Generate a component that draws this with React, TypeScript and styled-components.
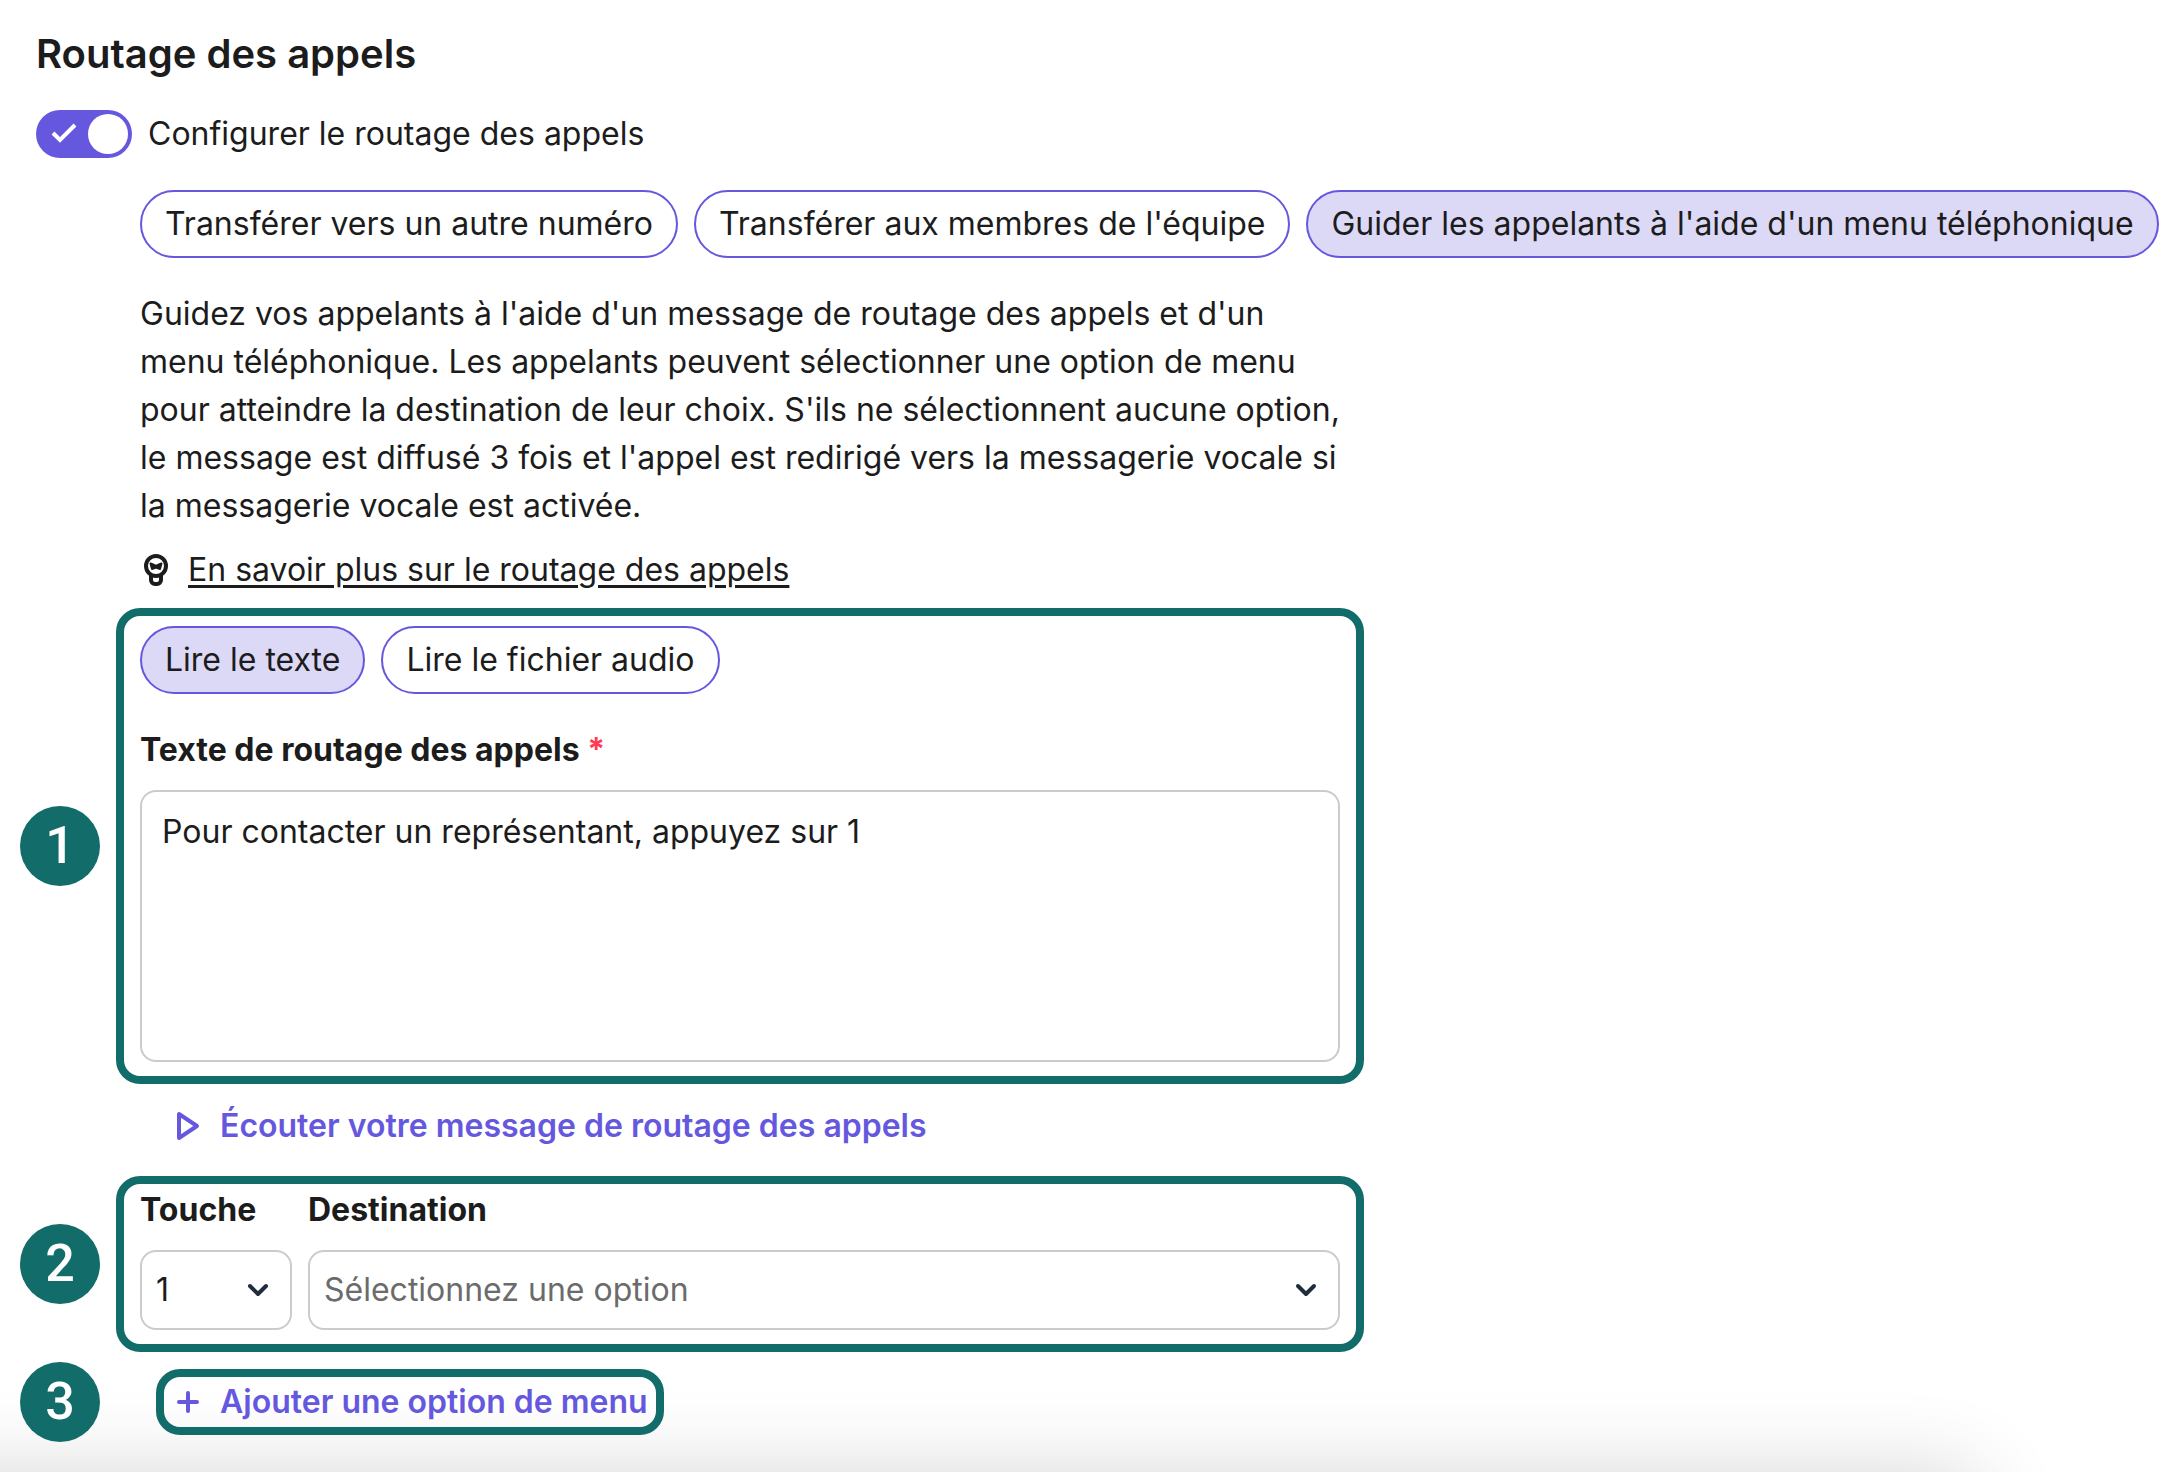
import React from "react";
import styled, { createGlobalStyle } from "styled-components";

const ink = "#1c1c1c";
const violet = "#6558de";
const lilac = "#dcd9f7";
const teal = "#126c69";
const line = "#cbcbcb";

const GlobalStyle = createGlobalStyle`
  *, *::before, *::after { box-sizing: border-box; }
  body { margin: 0; background: #fff; }
  body, button, input, textarea, select {
    font-family: Inter, "Liberation Sans", sans-serif;
    font-size: 32px;
    line-height: 48px;
    color: ${ink};
  }
`;

const Page = styled.main`
  position: relative;
  isolation: isolate;
  min-height: 100vh;
  overflow: hidden;
  padding: 24px 12px 28px 20px;
`;

const Heading = styled.h1`
  margin: 0 16px;
  font-size: 40px;
  font-weight: 600;
  line-height: 60px;
`;

const ToggleRow = styled.label`
  display: flex;
  align-items: center;
  gap: 16px;
  margin: 26px 16px 0;
  cursor: pointer;
`;

const Switch = styled.span`
  display: grid;
  width: 96px;
  height: 48px;
  padding: 4px;
  border-radius: 24px;
  background: ${violet};
  grid-template-columns: 48px 40px;
  align-items: center;

  & > * { grid-row: 1; }
`;

const SwitchInput = styled.input`
  appearance: none;
  grid-column: 1 / 3;
  width: 88px;
  height: 40px;
  margin: 0;
  border-radius: 20px;
  cursor: pointer;
`;

const SwitchCheck = styled.svg`
  grid-column: 1;
  justify-self: center;
  width: 28px;
  height: 24px;
`;

const Knob = styled.span`
  grid-column: 2;
  width: 40px;
  height: 40px;
  border-radius: 50%;
  background: #fff;
`;

const Intro = styled.section`
  display: flex;
  flex-direction: column;
  padding-left: 120px;
  margin-top: 32px;
`;

const ChipRow = styled.div`
  display: flex;
  flex-wrap: wrap;
  gap: 16px;
`;

const Chip = styled.button<{ $selected?: boolean }>`
  height: 68px;
  padding: 0 23px;
  border: 2px solid ${violet};
  border-radius: 34px;
  background: ${({ $selected }) => ($selected ? lilac : "#fff")};
  white-space: nowrap;
  cursor: pointer;
`;

const Description = styled.p`
  max-width: 1200px;
  margin: 32px 0 16px;
`;

const LearnMore = styled.a`
  display: flex;
  align-items: center;
  align-self: flex-start;
  gap: 16px;
  color: ${ink};
  text-decoration: none;

  span {
    text-decoration: underline;
    text-decoration-thickness: 3px;
    text-underline-offset: 4px;
  }
`;

const BulbIcon = styled.svg`
  width: 32px;
  height: 40px;
`;

const Step = styled.section`
  display: grid;
  grid-template-columns: 80px minmax(0, 1248px);
  align-items: center;
  column-gap: 16px;
`;

const StepNumber = styled.span`
  display: grid;
  place-items: center;
  width: 80px;
  height: 80px;
  border-radius: 50%;
  background: ${teal};
  color: #fff;
  font-family: Roboto, "Liberation Sans", sans-serif;
  font-size: 52px;
  font-weight: 500;
  line-height: 60px;
`;

const Frame = styled.div`
  border: 8px solid ${teal};
  border-radius: 24px;
`;

const MessageStep = styled(Step)`
  margin-top: 14px;
`;

const MessageFrame = styled(Frame)`
  display: flex;
  flex-direction: column;
  padding: 10px 16px 14px;
`;

const Label = styled.label`
  font-weight: 700;
`;

const MessageLabel = styled(Label)`
  margin: 32px 0 16px;
`;

const Required = styled.span`
  color: #ff3b55;
`;

const Message = styled.textarea`
  width: 100%;
  height: 272px;
  padding: 16px 20px;
  border: 2px solid ${line};
  border-radius: 16px;
  background: #fff;
  resize: none;
`;

const ActionButton = styled.button`
  display: flex;
  align-items: center;
  gap: 16px;
  padding: 0;
  border: 0;
  background: transparent;
  color: ${violet};
  font-weight: 600;
  white-space: nowrap;
  cursor: pointer;
`;

const ActionIcon = styled.svg`
  width: 32px;
  height: 32px;
`;

const Listen = styled.div`
  display: flex;
  padding: 18px 0 26px 152px;
`;

const OptionFrame = styled(Frame)`
  display: grid;
  grid-template-columns: 152px minmax(0, 1fr);
  gap: 16px;
  padding: 2px 16px 14px;
`;

const Field = styled.div`
  display: flex;
  flex-direction: column;
  gap: 16px;
`;

const SelectBox = styled.div`
  display: grid;
  align-items: center;

  & > * { grid-area: 1 / 1; }
`;

const Select = styled.select<{ $muted?: boolean }>`
  appearance: none;
  width: 100%;
  height: 80px;
  padding: 0 64px 0 14px;
  border: 2px solid ${line};
  border-radius: 16px;
  background: #fff;
  color: ${({ $muted }) => ($muted ? "#6b6b6b" : ink)};
`;

const Chevron = styled.svg`
  justify-self: end;
  width: 24px;
  height: 24px;
  margin-right: 22px;
  pointer-events: none;
`;

const AddStep = styled(Step)`
  margin-top: 10px;
`;

const AddFrame = styled(Frame)`
  justify-self: start;
  margin-left: 40px;
  padding: 1px 8px;
`;

const BottomShade = styled.div`
  position: absolute;
  z-index: -1;
  inset: auto 0 0 0;
  height: 100px;
  overflow: hidden;
  pointer-events: none;

  &::after {
    content: "";
    position: absolute;
    top: 100px;
    left: -200px;
    right: 200px;
    height: 200px;
    border-radius: 24px;
    box-shadow: 0 0 84px rgba(0, 0, 0, 0.16);
  }
`;

function SelectChevron() {
  return (
    <Chevron viewBox="0 0 24 24" fill="none" stroke="#1f2d3d" strokeWidth="4" strokeLinecap="round" strokeLinejoin="round" aria-hidden="true">
      <path d="M4 8l8 8 8-8" />
    </Chevron>
  );
}

export default function App() {
  return (
    <>
      <GlobalStyle />
      <Page lang="fr">
        <BottomShade />
        <Heading>Routage des appels</Heading>
        <ToggleRow>
          <Switch>
            <SwitchInput type="checkbox" role="switch" defaultChecked />
            <SwitchCheck viewBox="0 0 28 24" fill="none" stroke="#fff" strokeWidth="4" aria-hidden="true">
              <path d="M3 11l7 7L25 3" />
            </SwitchCheck>
            <Knob />
          </Switch>
          Configurer le routage des appels
        </ToggleRow>
        <Intro>
          <ChipRow>
            <Chip type="button">Transférer vers un autre numéro</Chip>
            <Chip type="button">Transférer aux membres de l'équipe</Chip>
            <Chip type="button" $selected>Guider les appelants à l'aide d'un menu téléphonique</Chip>
          </ChipRow>
          <Description>
            Guidez vos appelants à l'aide d'un message de routage des appels et d'un menu
            téléphonique. Les appelants peuvent sélectionner une option de menu pour atteindre la
            destination de leur choix. S'ils ne sélectionnent aucune option, le message est diffusé
            3 fois et l'appel est redirigé vers la messagerie vocale si la messagerie vocale est
            activée.
          </Description>
          <LearnMore href="#routage">
            <BulbIcon viewBox="0 0 32 40" fill="none" stroke={ink} strokeLinejoin="round" aria-hidden="true">
              <circle cx="16" cy="16" r="10" strokeWidth="4" />
              <path d="M11 25v5a4 4 0 0 0 4 4h2a4 4 0 0 0 4-4v-5" strokeWidth="4" />
              <path d="M10.500 13.500l2.500 1 3 1.500 3-1.500 2.500-1-1.500 5.500-4-1.500-4 1.500z" fill={ink} strokeWidth="2" />
            </BulbIcon>
            <span>En savoir plus sur le routage des appels</span>
          </LearnMore>
        </Intro>
        <MessageStep>
          <StepNumber>1</StepNumber>
          <MessageFrame>
            <ChipRow>
              <Chip type="button" $selected>Lire le texte</Chip>
              <Chip type="button">Lire le fichier audio</Chip>
            </ChipRow>
            <MessageLabel htmlFor="message">
              Texte de routage des appels <Required>*</Required>
            </MessageLabel>
            <Message id="message" defaultValue="Pour contacter un représentant, appuyez sur 1" />
          </MessageFrame>
        </MessageStep>
        <Listen>
          <ActionButton type="button">
            <ActionIcon viewBox="0 0 32 32" fill="none" stroke="currentColor" strokeWidth="4" strokeLinejoin="round" aria-hidden="true">
              <path d="M7 4v24l18-12z" />
            </ActionIcon>
            Écouter votre message de routage des appels
          </ActionButton>
        </Listen>
        <Step>
          <StepNumber>2</StepNumber>
          <OptionFrame>
            <Field>
              <Label htmlFor="key">Touche</Label>
              <SelectBox>
                <Select id="key" defaultValue="1">
                  <option>1</option>
                </Select>
                <SelectChevron />
              </SelectBox>
            </Field>
            <Field>
              <Label htmlFor="destination">Destination</Label>
              <SelectBox>
                <Select id="destination" defaultValue="" $muted>
                  <option value="">Sélectionnez une option</option>
                </Select>
                <SelectChevron />
              </SelectBox>
            </Field>
          </OptionFrame>
        </Step>
        <AddStep>
          <StepNumber>3</StepNumber>
          <AddFrame>
            <ActionButton type="button">
              <ActionIcon viewBox="0 0 32 32" fill="none" stroke="currentColor" strokeWidth="4" strokeLinecap="round" aria-hidden="true">
                <path d="M16 7v18M7 16h18" />
              </ActionIcon>
              Ajouter une option de menu
            </ActionButton>
          </AddFrame>
        </AddStep>
      </Page>
    </>
  );
}
